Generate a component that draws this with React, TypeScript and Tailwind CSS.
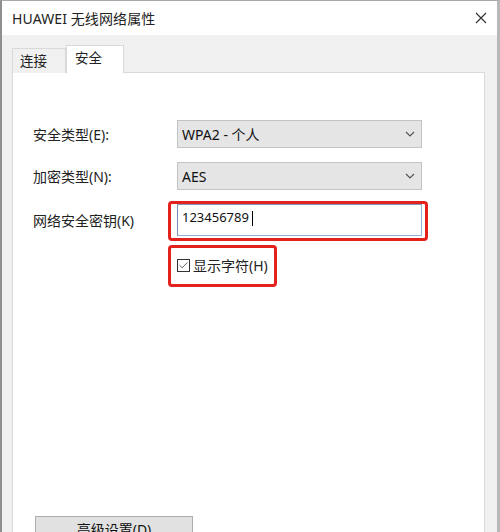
import { Check } from "lucide-react";

const font = "font-['Noto_Sans','Noto_Sans_CJK_SC',sans-serif]";

const Chevron = () => (
  <svg width="10" height="6" viewBox="0 0 10 6" className="shrink-0">
    <path d="M1 1l4 4 4-4" stroke="#555" strokeWidth="1.2" fill="none" />
  </svg>
);

const Select = ({ value }: { value: string }) => (
  <div className="w-[245px] h-[28px] bg-[#e5e5e5] border border-[#c3c3c3] flex items-center justify-between pl-[4px] pr-[6px] text-[14px] text-[#111]">
    <span>{value}</span>
    <Chevron />
  </div>
);

export default function App() {
  return (
    <div
      className={`w-[500px] h-[532px] overflow-hidden bg-[#f0f0f0] border-l-2 border-t border-r-[3px] border-l-[#8e8e8e] border-t-[#a8a8a8] border-r-[#b8b8b8] flex flex-col ${font}`}
    >
      {/* title bar */}
      <div className="h-[34px] shrink-0 bg-white flex items-center justify-between pl-[10px] pr-[10px]">
        <span className="text-[14px] text-[#222] tracking-[0.1px]">HUAWEI 无线网络属性</span>
        <svg width="12" height="12" viewBox="0 0 12 12">
          <path d="M1 1l10 10M11 1L1 11" stroke="#333" strokeWidth="1.2" />
        </svg>
      </div>

      <div className="flex-1 flex flex-col pl-[10px] pr-[12px] pt-[11px]">
        {/* tabs */}
        <div className="flex items-end h-[27px] relative z-10 -mb-px">
          <div className="w-[54px] h-[25px] bg-[#f0f0f0] border border-b-0 border-[#d9d9d9] flex items-center pl-[7px] text-[13.5px] text-[#222]">
            连接
          </div>
          <div className="w-[58px] h-[28px] bg-white border border-b-0 border-[#d9d9d9] flex items-center pl-[8px] pb-[3px] text-[13.5px] text-[#222]">
            安全
          </div>
        </div>

        {/* panel */}
        <div className="flex-1 bg-white border border-[#d9d9d9] pl-[20px] pt-[47px] flex flex-col text-[14px] text-[#222]">
          <div className="flex items-center">
            <span className="w-[144px]">安全类型(E):</span>
            <Select value="WPA2 - 个人" />
          </div>
          <div className="flex items-center mt-[14px]">
            <span className="w-[144px]">加密类型(N):</span>
            <Select value="AES" />
          </div>
          <div className="flex items-center mt-[14px]">
            <span className="w-[144px]">网络安全密钥(K)</span>
            <div className="relative">
              <div className="w-[245px] h-[32px] bg-white border border-[#8fb3d9] border-l-[#6f8fb5] border-t-[#7f9cc0] flex items-center pl-[4px] pb-[4px] text-[13px] text-[#111]">
                123456789<span className="ml-[3px] w-px h-[15px] bg-black" />
              </div>
              <div className="absolute -left-[9px] -right-[6px] -top-[3px] -bottom-[5px] border-[3px] border-[#e3211d] rounded-[4px]" />
            </div>
          </div>
          <div className="flex items-center mt-[19px] pl-[144px]">
            <div className="relative flex items-center">
              <div className="w-[13px] h-[13px] border border-[#333] flex items-center justify-center">
                <Check size={11} strokeWidth={1.6} color="#222" />
              </div>
              <span className="ml-[3px] text-[14px]">显示字符(H)</span>
              <div className="absolute -left-[9px] -right-[9px] -top-[10px] -bottom-[11px] border-[3px] border-[#e3211d] rounded-[4px]" />
            </div>
          </div>
          <div className="mt-[240px] ml-[2px] w-[158px] h-[28px] bg-[#e1e1e1] border border-[#adadad] flex items-center justify-center text-[14px] text-[#111] pb-[1px]">
            高级设置(D)
          </div>
        </div>
      </div>
    </div>
  );
}
